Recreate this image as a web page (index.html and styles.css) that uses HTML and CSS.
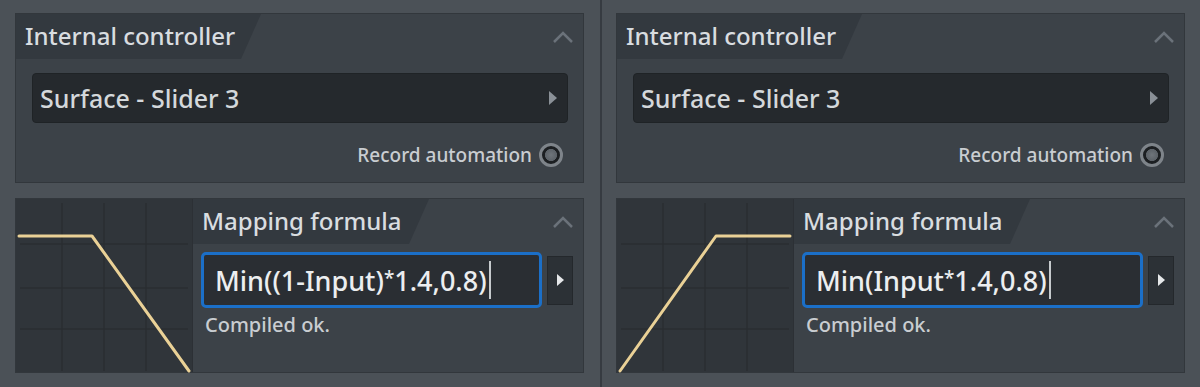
FILE: index.html
```html
<!DOCTYPE html>
<html lang="en">

<head>
	<meta charset="UTF-8">
	<meta name="viewport" content="width=device-width, initial-scale=1.0">
	<title>Controller mapping</title>
	<link rel="stylesheet" href="styles.css">
</head>

<body>
	<div class="page">
		<!-- 左侧：反向映射 -->
		<section class="column">
			<div class="panel controller">
				<div class="panel-head">
					<div class="tab tab-wide">Internal controller</div>
					<svg class="chevron" width="22" height="12" viewBox="0 0 22 12"><polyline points="2,11 11,2 20,11" /></svg>
				</div>
				<div class="select">
					<span>Surface - Slider 3</span>
					<span class="arrow"></span>
				</div>
				<div class="record">
					<span>Record automation</span>
					<span class="radio"></span>
				</div>
			</div>
			<div class="panel mapping">
				<div class="graph">
					<svg width="176" height="175" viewBox="0 0 176 175">
						<g class="grid">
							<line x1="46" y1="4" x2="46" y2="172" />
							<line x1="88" y1="4" x2="88" y2="172" />
							<line x1="130" y1="4" x2="130" y2="172" />
							<line x1="4" y1="45" x2="172" y2="45" />
							<line x1="4" y1="89" x2="172" y2="89" />
							<line x1="4" y1="130" x2="172" y2="130" />
						</g>
						<polyline class="curve" points="3,37 76,37 173,172" />
					</svg>
				</div>
				<div class="formula">
					<div class="panel-head">
						<div class="tab tab-narrow">Mapping formula</div>
						<svg class="chevron" width="22" height="12" viewBox="0 0 22 12"><polyline points="2,11 11,2 20,11" /></svg>
					</div>
					<div class="formula-row">
						<div class="formula-input">Min((1-Input)<span class="star">*</span>1.4,0.8)<span class="caret"></span></div>
						<div class="formula-btn"><span class="arrow"></span></div>
					</div>
					<div class="status">Compiled ok.</div>
				</div>
			</div>
		</section>

		<div class="divider"></div>

		<!-- 右侧：正向映射 -->
		<section class="column">
			<div class="panel controller">
				<div class="panel-head">
					<div class="tab tab-wide">Internal controller</div>
					<svg class="chevron" width="22" height="12" viewBox="0 0 22 12"><polyline points="2,11 11,2 20,11" /></svg>
				</div>
				<div class="select">
					<span>Surface - Slider 3</span>
					<span class="arrow"></span>
				</div>
				<div class="record">
					<span>Record automation</span>
					<span class="radio"></span>
				</div>
			</div>
			<div class="panel mapping">
				<div class="graph">
					<svg width="176" height="175" viewBox="0 0 176 175">
						<g class="grid">
							<line x1="46" y1="4" x2="46" y2="172" />
							<line x1="88" y1="4" x2="88" y2="172" />
							<line x1="130" y1="4" x2="130" y2="172" />
							<line x1="4" y1="45" x2="172" y2="45" />
							<line x1="4" y1="89" x2="172" y2="89" />
							<line x1="4" y1="130" x2="172" y2="130" />
						</g>
						<polyline class="curve" points="3,172 99,37 173,37" />
					</svg>
				</div>
				<div class="formula">
					<div class="panel-head">
						<div class="tab tab-narrow">Mapping formula</div>
						<svg class="chevron" width="22" height="12" viewBox="0 0 22 12"><polyline points="2,11 11,2 20,11" /></svg>
					</div>
					<div class="formula-row">
						<div class="formula-input">Min(Input<span class="star">*</span>1.4,0.8)<span class="caret"></span></div>
						<div class="formula-btn"><span class="arrow"></span></div>
					</div>
					<div class="status">Compiled ok.</div>
				</div>
			</div>
		</section>
	</div>
</body>

</html>
```

FILE: styles.css
```css
body {
	margin: 0;
	background: #4b5157;
	font-family: "Noto Sans", "Open Sans", sans-serif;
	font-weight: 500;
	color: #d6dadd;
	overflow: hidden;
}

.page {
	display: flex;
	height: 387px;
	padding: 13px 0 0 15px;
	box-sizing: border-box;
}

.column {
	display: flex;
	flex-direction: column;
	gap: 15px;
	width: 569px;
}

.divider {
	width: 2px;
	margin: -13px 14px 0 16px;
	background: #363b41;
}

.panel {
	background: #3c4248;
	border: 1px solid #32373c;
	box-sizing: border-box;
}

.controller {
	height: 170px;
}

.mapping {
	height: 175px;
	display: flex;
}

.panel-head {
	display: flex;
	justify-content: space-between;
	align-items: center;
}

.tab {
	height: 45px;
	background: #33393f;
	clip-path: polygon(0 0, 100% 0, calc(100% - 20px) 100%, 0 100%);
	box-sizing: border-box;
	display: flex;
	align-items: center;
	padding-bottom: 3px;
	font-size: 24px;
	color: #d9dde0;
}

.tab-wide {
	width: 245px;
	padding-left: 9px;
}

.tab-narrow {
	width: 236px;
	padding-left: 9px;
}

.chevron {
	margin-right: 9px;
	fill: none;
	stroke: #6b727a;
	stroke-width: 2.5;
}

.select {
	margin: 14px 15px 0 16px;
	height: 50px;
	background: #25292d;
	border: 1px solid #1f2326;
	border-radius: 4px;
	box-sizing: border-box;
	display: flex;
	align-items: center;
	justify-content: space-between;
	padding: 0 10px 0 7px;
	font-size: 25px;
	color: #d4d8db;
}

.arrow {
	width: 0;
	height: 0;
	border-left: 8px solid #8a9097;
	border-top: 7px solid transparent;
	border-bottom: 7px solid transparent;
}

.record {
	display: flex;
	justify-content: flex-end;
	align-items: center;
	gap: 7px;
	margin-top: 19px;
	padding-right: 20px;
	font-size: 19px;
	color: #c9cdd1;
}

.radio {
	width: 24px;
	height: 24px;
	border-radius: 50%;
	box-sizing: border-box;
	border: 3px solid #7e848a;
	background: radial-gradient(circle, #6f757b 0, #5c6268 45%, #1c1f22 50%, #1c1f22 100%);
}

.graph {
	width: 176px;
	background: #30353a;
	border-right: 1px solid #2c3035;
}

.graph svg {
	display: block;
}

.grid line {
	stroke: #2a2e32;
	stroke-width: 1.5;
}

.curve {
	fill: none;
	stroke: #ead196;
	stroke-width: 3;
	stroke-linejoin: round;
	stroke-linecap: round;
}

.formula {
	flex: 1;
}

.formula-row {
	display: flex;
	align-items: center;
	gap: 5px;
	margin: 8px 0 0 8px;
}

.formula-input {
	width: 341px;
	height: 56px;
	box-sizing: border-box;
	border: 3px solid #1b6fc8;
	border-radius: 5px;
	background: #2a2e33;
	display: flex;
	align-items: center;
	padding-left: 11px;
	font-size: 27px;
	color: #eceef0;
}

.star {
	font-size: 19px;
	align-self: flex-start;
	margin-top: 10px;
}

.caret {
	width: 2px;
	height: 38px;
	margin-left: 2px;
	background: #c6cacd;
}

.formula-btn {
	width: 26px;
	height: 49px;
	background: #2c3136;
	border: 1px solid #24282c;
	box-sizing: border-box;
	display: flex;
	align-items: center;
	justify-content: center;
}

.formula-btn .arrow {
	border-left-color: #e6e8ea;
	border-left-width: 7px;
	border-top-width: 6px;
	border-bottom-width: 6px;
}

.status {
	margin: 3px 0 0 12px;
	font-size: 20px;
	color: #c9cdd1;
}
```
